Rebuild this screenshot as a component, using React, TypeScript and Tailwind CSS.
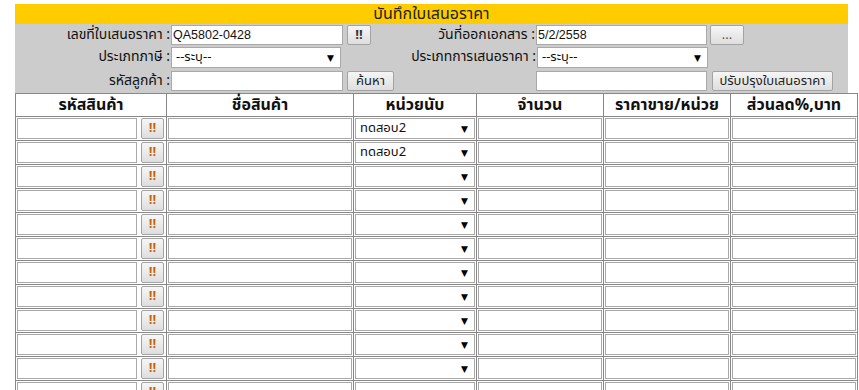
import React from "react";

const FONT = { fontFamily: "Tahoma, 'Noto Sans Thai', 'Noto Sans', 'DejaVu Sans', sans-serif" };

const ROWS = Array.from({ length: 12 }).map((_, i) => ({ unit: i < 2 ? "ทดสอบ2" : "" }));

function Btn({ children, className }: { children: React.ReactNode; className?: string }) {
  return (
    <button
      className={
        "flex shrink-0 items-center justify-center rounded-[2px] border border-[#a3a3a3] bg-gradient-to-b from-[#f6f6f6] to-[#dedede] text-[13px] leading-none text-[#222] " +
        (className || "")
      }
    >
      {children}
    </button>
  );
}

function Select({ value, className }: { value: string; className?: string }) {
  return (
    <div className={"relative flex shrink-0 items-center border border-[#a9a9a9] bg-white pl-1 text-[13px] leading-none text-[#111] " + (className || "")}>
      <span>{value}</span>
      <span className="absolute right-[6px] top-1/2 -translate-y-1/2 text-[9px] leading-none text-black">▼</span>
    </div>
  );
}

function TextBox({ value, className }: { value?: string; className?: string }) {
  return (
    <input
      readOnly
      value={value || ""}
      className={"block shrink-0 border border-[#a9a9a9] bg-white px-px text-[12.5px] leading-none text-[#111] outline-none " + (className || "")}
      style={{ fontFamily: "'Liberation Sans', Arial, sans-serif" }}
    />
  );
}

export default function App() {
  return (
    <div className="h-[390px] w-[859px] overflow-hidden bg-white pt-1" style={FONT}>
      {/* Title */}
      <div className="ml-[15px] flex h-5 w-[833px] items-center justify-center bg-[#ffcc00] text-[16px] leading-none text-[#222]">
        บันทึกใบเสนอราคา
      </div>

      {/* Form */}
      <div className="ml-[15px] w-[833px] bg-[#cccccc] pt-px text-[14px] text-[#111]">
        <div className="flex h-[22px] items-start">
          <div className="w-[155px] pt-[2px] text-right leading-[16px]">เลขที่ใบเสนอราคา :</div>
          <TextBox value="QA5802-0428" className="ml-px h-5 w-[172px]" />
          <Btn className="ml-1 h-5 w-6 font-bold text-[#333]">!!</Btn>
          <div className="w-[164px] pt-[2px] text-right leading-[16px]">วันที่ออกเอกสาร :</div>
          <TextBox value="5/2/2558" className="ml-px h-5 w-[171px]" />
          <Btn className="ml-[3px] h-5 w-[34px] text-[11px] text-[#555]">...</Btn>
        </div>
        <div className="flex h-[24px] items-start">
          <div className="w-[155px] pt-[2px] text-right leading-[16px]">ประเภทภาษี :</div>
          <Select value="--ระบุ--" className="ml-px h-[21px] w-[170px]" />
          <div className="w-[195px] pt-[2px] text-right leading-[16px]">ประเภทการเสนอราคา :</div>
          <Select value="--ระบุ--" className="ml-px h-[21px] w-[171px]" />
        </div>
        <div className="flex h-[22px] items-start">
          <div className="w-[155px] pt-[2px] text-right leading-[16px]">รหัสลูกค้า :</div>
          <TextBox className="ml-px h-5 w-[172px]" />
          <Btn className="ml-1 h-5 w-[47px]">ค้นหา</Btn>
          <div className="w-[141px]" />
          <TextBox className="ml-px h-5 w-[171px]" />
          <Btn className="ml-[5px] h-5 w-[121px]">ปรับปรุงใบเสนอราคา</Btn>
        </div>
      </div>

      {/* Items table */}
      <table className="ml-[15px] w-[842px] table-fixed border-collapse border border-[#888]">
        <colgroup>
          <col className="w-[151px]" />
          <col className="w-[187px]" />
          <col className="w-[123px]" />
          <col className="w-[127px]" />
          <col className="w-[127px]" />
          <col className="w-[127px]" />
        </colgroup>
        <thead>
          <tr className="h-[23px] text-[16px] font-bold leading-none text-[#111]">
            {["รหัสสินค้า", "ชื่อสินค้า", "หน่วยนับ", "จำนวน", "ราคาขาย/หน่วย", "ส่วนลด%,บาท"].map((h) => (
              <th key={h} className="border border-[#888] p-0 text-center">
                {h}
              </th>
            ))}
          </tr>
        </thead>
        <tbody className="leading-none">
          {ROWS.map((r, i) => (
            <tr key={i} className="h-6">
              <td className="border border-[#888] p-px">
                <div className="flex items-center justify-between pr-px">
                  <TextBox className="h-[21px] w-[120px]" />
                  <Btn className="h-[21px] w-[23px] font-bold text-[#c8640a]">!!</Btn>
                </div>
              </td>
              <td className="border border-[#888] p-px">
                <TextBox className="h-[21px] w-full" />
              </td>
              <td className="border border-[#888] p-px">
                <Select value={r.unit} className="h-[21px] w-full" />
              </td>
              <td className="border border-[#888] p-px">
                <TextBox className="h-[21px] w-full" />
              </td>
              <td className="border border-[#888] p-px">
                <TextBox className="h-[21px] w-full" />
              </td>
              <td className="border border-[#888] p-px">
                <TextBox className="h-[21px] w-full" />
              </td>
            </tr>
          ))}
        </tbody>
      </table>
    </div>
  );
}
